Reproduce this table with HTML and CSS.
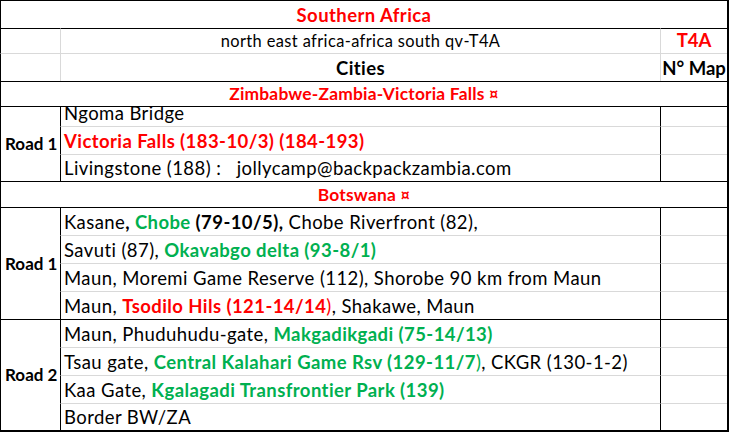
FILE: index.html
```html
<!DOCTYPE html>
<html lang="en">
<head>
<meta charset="utf-8">
<title>Southern Africa</title>
<link rel="stylesheet" href="styles.css">
</head>
<body>
<div class="sheet">
  <div class="cell all center red bold">Southern Africa</div>

  <div class="cell"></div>
  <div class="cell gl center small">north east africa-africa south qv-T4A</div>
  <div class="cell gl center red bold tight">T4A</div>

  <div class="cell gt"></div>
  <div class="cell gt gl center bold">Cities</div>
  <div class="cell gt gl center bold tight">N° Map</div>

  <div class="cell all center red bold section">Zimbabwe-Zambia-Victoria Falls <span class="cur">¤</span></div>

  <div class="cell road r3 bold">Road 1</div>
  <div class="cell">Ngoma Bridge</div>
  <div class="cell"></div>
  <div class="cell gt"><span class="red bold">Victoria Falls (183-10/3) (184-193)</span></div>
  <div class="cell gt"></div>
  <div class="cell gt">Livingstone (188) :   jollycamp@backpackzambia.com</div>
  <div class="cell gt"></div>

  <div class="cell all center red bold section">Botswana <span class="cur">¤</span></div>

  <div class="cell road r4 bold">Road 1</div>
  <div class="cell">Kasane<b>, </b><b class="green">Chobe</b><b> (79-10/5),</b> Chobe Riverfront (82),</div>
  <div class="cell"></div>
  <div class="cell gt">Savuti (87), <b class="green">Okavabgo delta (93-8/1)</b></div>
  <div class="cell gt"></div>
  <div class="cell gt">Maun, Moremi Game Reserve (112), Shorobe 90 km from Maun</div>
  <div class="cell gt"></div>
  <div class="cell gt">Maun, <b class="red">Tsodilo Hils (121-14/14</b><span class="red">)</span>, Shakawe, Maun</div>
  <div class="cell gt"></div>

  <div class="cell road r4 bold">Road 2</div>
  <div class="cell">Maun, Phuduhudu-gate, <b class="green">Makgadikgadi (75-14/13)</b></div>
  <div class="cell"></div>
  <div class="cell gt">Tsau gate, <b class="green">Central Kalahari Game Rsv (129-11/7</b><span class="green">)</span>, CKGR (130-1-2)</div>
  <div class="cell gt"></div>
  <div class="cell gt">Kaa Gate, <b class="green">Kgalagadi Transfrontier Park (139)</b></div>
  <div class="cell gt"></div>
  <div class="cell gt">Border BW/ZA</div>
  <div class="cell gt"></div>
</div>
</body>
</html>
```

FILE: styles.css
```css
html, body {
  margin: 0;
  padding: 0;
  background: #ffffff;
}

body {
  font-family: Lato, "Open Sans", "Liberation Sans", sans-serif;
  font-size: 18.5px;
  letter-spacing: 0.42px;
  color: #000000;
}

.sheet {
  display: grid;
  grid-template-columns: 60px 600px 67px;
  grid-template-rows: 28px 25px 28px 25px 20px 28px 27px 26px 28px 28px 28px 28px 28px 28px 28px 27px;
  width: 729px;
  box-sizing: border-box;
  border-right: 2px solid #000;
  border-bottom: 2px solid #000;
}

.cell {
  box-sizing: border-box;
  border-top: 1px solid #000;
  border-left: 1px solid #000;
  display: flex;
  align-items: flex-end;
  padding: 0 2px 3px 3px;
  line-height: 20px;
  white-space: pre;
  overflow: visible;
  min-width: 0;
}

.cell.gt {
  border-top-color: #d9d9d9;
}

.cell.gl {
  border-left-color: #d9d9d9;
}

.cell.all {
  grid-column: 1 / 4;
}

.cell.center {
  justify-content: center;
  padding-left: 0;
  padding-right: 0;
}

.cell.small {
  font-size: 16.4px;
  letter-spacing: 0.4px;
  padding-bottom: 2px;
}

.cell.tight {
  letter-spacing: 0;
}

.cell.section {
  font-size: 17.4px;
  letter-spacing: 0.2px;
  padding-bottom: 2px;
}

.cur {
  font-size: 16.5px;
}

.cell.road {
  align-items: center;
  padding: 0 0 0 4px;
  font-size: 17px;
  letter-spacing: 0;
}

.cell.r3 {
  grid-row: span 3;
}

.cell.r4 {
  grid-row: span 4;
}

.bold,
b {
  font-weight: 700;
}

.red {
  color: #ff0000;
}

.green {
  color: #00b050;
}
```
